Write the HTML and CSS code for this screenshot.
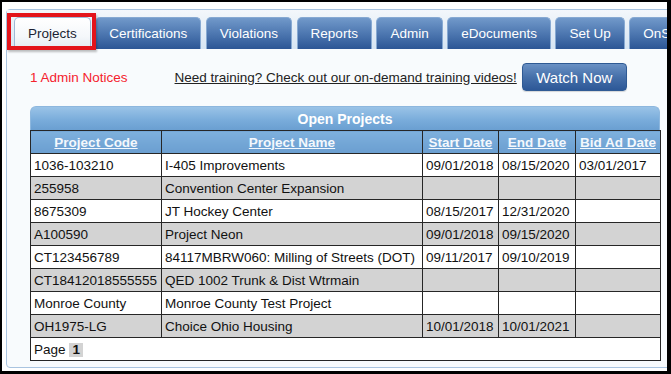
FILE: index.html
```html
<!DOCTYPE html>
<html>
<head>
<meta charset="utf-8">
<link rel="stylesheet" href="styles.css">
</head>
<body>
<div class="frame">
  <div class="panel">
    <div class="tabs">
      <div class="tab active">Projects</div>
      <div class="tab">Certifications</div>
      <div class="tab">Violations</div>
      <div class="tab">Reports</div>
      <div class="tab">Admin</div>
      <div class="tab">eDocuments</div>
      <div class="tab">Set Up</div>
      <div class="tab">OnSite</div>
    </div>
    <div class="content">
      <div class="notice-row">
        <span class="notices">1 Admin Notices</span>
        <a class="training" href="#">Need training? Check out our on-demand training videos!</a>
        <button class="watch">Watch Now</button>
      </div>
      <div class="grid">
        <div class="grid-title">Open Projects</div>
        <table class="projects">
          <colgroup>
            <col class="c-code"><col class="c-name"><col class="c-start"><col class="c-end"><col class="c-bid">
          </colgroup>
          <thead>
            <tr>
              <th><a href="#">Project Code</a></th>
              <th><a href="#">Project Name</a></th>
              <th><a href="#">Start Date</a></th>
              <th><a href="#">End Date</a></th>
              <th><a href="#">Bid Ad Date</a></th>
            </tr>
          </thead>
          <tbody>
            <tr><td>1036-103210</td><td>I-405 Improvements</td><td>09/01/2018</td><td>08/15/2020</td><td>03/01/2017</td></tr>
            <tr class="alt"><td>255958</td><td>Convention Center Expansion</td><td></td><td></td><td></td></tr>
            <tr><td>8675309</td><td>JT Hockey Center</td><td>08/15/2017</td><td>12/31/2020</td><td></td></tr>
            <tr class="alt"><td>A100590</td><td>Project Neon</td><td>09/01/2018</td><td>09/15/2020</td><td></td></tr>
            <tr><td>CT123456789</td><td>84117MBRW060: Milling of Streets (DOT)</td><td>09/11/2017</td><td>09/10/2019</td><td></td></tr>
            <tr class="alt"><td>CT18412018555555</td><td>QED 1002 Trunk &amp; Dist Wtrmain</td><td></td><td></td><td></td></tr>
            <tr><td>Monroe County</td><td>Monroe County Test Project</td><td></td><td></td><td></td></tr>
            <tr class="alt"><td>OH1975-LG</td><td>Choice Ohio Housing</td><td>10/01/2018</td><td>10/01/2021</td><td></td></tr>
          </tbody>
          <tfoot>
            <tr><td colspan="5" class="pager">Page <span class="page-num">1</span></td></tr>
          </tfoot>
        </table>
      </div>
    </div>
  </div>
  <div class="highlight"></div>
</div>
</body>
</html>
```

FILE: styles.css
```css
html, body {
  margin: 0;
  padding: 0;
  background: #ffffff;
}

.frame {
  position: relative;
  width: 671px;
  height: 374px;
  box-sizing: border-box;
  border-style: solid;
  border-color: #000000;
  border-width: 2px 4px 3px 2px;
  background: #ffffff;
  overflow: hidden;
  font-family: "Liberation Sans", Arial, sans-serif;
  font-size: 13.5px;
  color: #111111;
}

.panel {
  margin: 7px 0 0 4px;
  width: 720px;
  border: 1px solid #a9c4e0;
  border-radius: 4px 0 0 4px;
  background: #f8fbfd;
}

.tabs {
  display: flex;
  gap: 4.5px;
  padding: 7px 0 0 7px;
  height: 32px;
  background: linear-gradient(#f3f7fb, #d6e5f3);
}

.tab {
  flex: none;
  height: 32px;
  line-height: 32px;
  box-sizing: border-box;
  padding: 0 13px;
  border: 1px solid #86a9d2;
  border-bottom: 0;
  border-radius: 5px 5px 0 0;
  background: linear-gradient(#7199ca, #4a74ae 55%, #2c5695);
  color: #ffffff;
  white-space: nowrap;
}

.tab.active {
  background: linear-gradient(#ffffff, #f4f7fa 60%, #e3eaf2);
  color: #1b1f33;
  border-color: #9fb9d6;
}

.content {
  padding: 14px 0 6px 23px;
}

.notice-row {
  display: flex;
  align-items: center;
  height: 28px;
}

.notices {
  color: #f5222d;
}

.training {
  margin-left: 47px;
  color: #222222;
  text-decoration: underline;
}

.watch {
  margin-left: 5px;
  width: 105px;
  height: 28px;
  border: 1px solid #2f5a94;
  border-radius: 4px;
  background: linear-gradient(#6a91c4, #4670aa 50%, #2d5897);
  color: #ffffff;
  font-family: "Liberation Sans", Arial, sans-serif;
  font-size: 15px;
  padding: 0;
  box-shadow: 0 1px 1px rgba(0, 0, 0, 0.15);
}

.grid {
  margin-top: 15px;
  width: 630px;
}

.grid-title {
  height: 24px;
  line-height: 24px;
  text-align: center;
  font-weight: bold;
  font-size: 14px;
  color: #ffffff;
  border-radius: 6px 6px 0 0;
  background: linear-gradient(#9ac3e7, #78abda 60%, #6a9fd1);
  border: 1px solid #8db7de;
  border-bottom: 0;
  box-sizing: border-box;
}

.projects {
  width: 630px;
  border-collapse: collapse;
  table-layout: fixed;
  background: #ffffff;
}

.c-code { width: 131px; }
.c-name { width: 261px; }
.c-start { width: 76px; }
.c-end { width: 77px; }
.c-bid { width: 85px; }

.projects th,
.projects td {
  border: 1px solid #262626;
  height: 22px;
  padding: 0 3px;
  white-space: nowrap;
  overflow: hidden;
}

.projects th {
  background: linear-gradient(#7eb0dd, #6a9ed0);
  text-align: center;
  font-weight: bold;
}

.projects th a {
  color: #f3f8fd;
  text-decoration: underline;
}

.projects td {
  text-align: left;
}

.projects tr.alt td {
  background: #d3d3d3;
}

.page-num {
  display: inline-block;
  width: 14px;
  height: 14px;
  line-height: 14px;
  text-align: center;
  font-weight: bold;
  background: #d3d3d3;
}

.highlight {
  position: absolute;
  left: 5px;
  top: 11px;
  width: 89px;
  height: 37px;
  box-sizing: border-box;
  border: 4px solid #e3141b;
  box-shadow: 1px 2px 2px rgba(0, 0, 0, 0.25);
}
```
